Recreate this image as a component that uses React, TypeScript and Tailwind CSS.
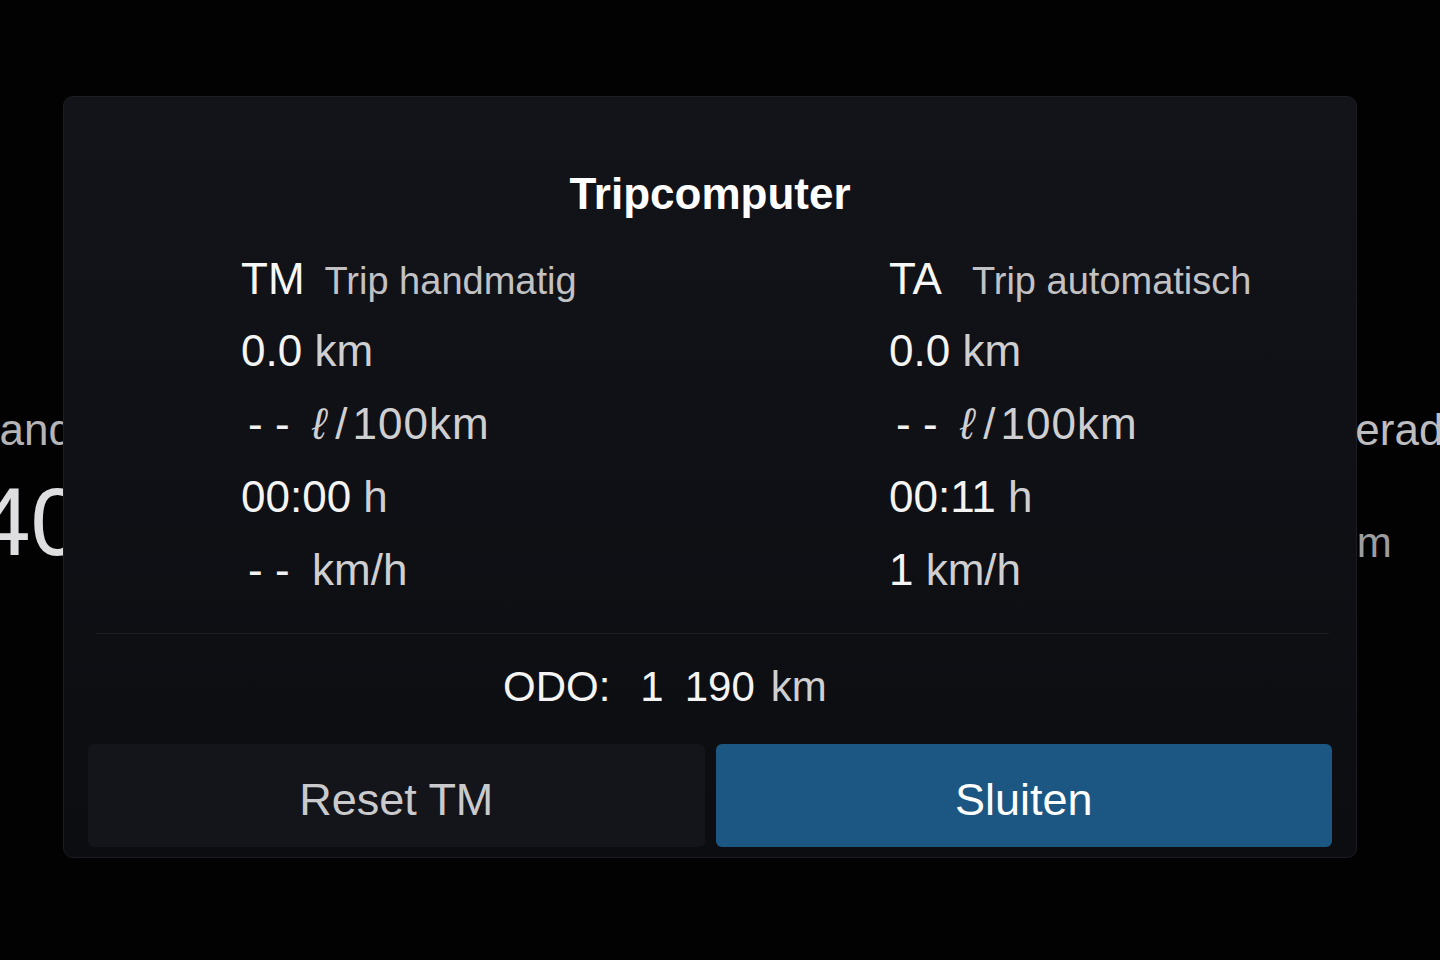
const font = "font-['Liberation_Sans',Arial,sans-serif]";

type Row = { value: string; unit: string; dashes?: boolean };

type TripProps = {
  code: string;
  label: string;
  labelGap: string;
  rows: Row[];
  className?: string;
};

// "ℓ/100km" is drawn with a slanted litre sign and a little air round the slash
function Unit({ unit }: { unit: string }) {
  if (unit === "ℓ/100km") {
    return (
      <span className="text-[#cfcfd1]">
        <span className="italic">ℓ</span>
        <span className="ml-[9px]">/</span>
        <span className="ml-[5px] tracking-[1px]">100km</span>
      </span>
    );
  }
  return <span className="text-[#cfcfd1]">{unit}</span>;
}

function TripColumn({ code, label, labelGap, rows, className }: TripProps) {
  return (
    <div className={className}>
      <div className="h-[70px] leading-[70px] whitespace-nowrap">
        <span className="text-[44px] text-[#f7f7f7]">{code}</span>
        <span className={`${labelGap} text-[38px] text-[#c2c2c4]`}>{label}</span>
      </div>
      {rows.map((row, i) => (
        <div key={i} className="h-[73px] leading-[73px] text-[44px] whitespace-nowrap">
          {row.dashes ? (
            <span className="inline-block w-[71px] pl-[7px] text-[#f2f2f2]">- -</span>
          ) : (
            <span className="text-[#f4f4f4]">{row.value} </span>
          )}
          <Unit unit={row.unit} />
        </div>
      ))}
    </div>
  );
}

export default function App() {
  return (
    <div className={`${font} relative h-[960px] w-full overflow-hidden bg-[#020203]`}>
      {/* page behind the dialog */}
      <div className="flex h-full">
        <div className="w-[84px] pt-[408px]">
          <div className="flex w-[73px] justify-end whitespace-nowrap text-[44px] leading-[44px] text-[#b4b4b6]">
            Afstand
          </div>
          <div className="mt-[22px] flex w-[84px] justify-end whitespace-nowrap text-[96px] leading-[96px] text-[#dedee0]">
            140
          </div>
        </div>
        <div className="flex-1" />
        <div className="w-[186px] pt-[408px]">
          <div className="ml-[28px] whitespace-nowrap text-[44px] leading-[44px] text-[#bdbdc0]">
            Actieradius
          </div>
          <div className="mt-[70px] whitespace-nowrap text-[42px] leading-[42px] text-[#9d9da0]">
            312 km
          </div>
        </div>
      </div>

      {/* Tripcomputer dialog */}
      <div className="absolute left-[63px] top-[96px] flex h-[762px] w-[1294px] flex-col rounded-[10px] border border-[#1b1d22] bg-linear-to-b from-[#121419] to-[#0c0d11]">
        <div className="pt-[75px]">
          <h1 className="text-center text-[44px] font-bold leading-[44px] text-white">Tripcomputer</h1>
        </div>

        <div className="mt-[28px] flex pl-[177px]">
          <TripColumn
            className="w-[648px]"
            code="TM"
            label="Trip handmatig"
            labelGap="ml-[20px]"
            rows={[
              { value: "0.0", unit: "km" },
              { value: "", unit: "ℓ/100km", dashes: true },
              { value: "00:00", unit: "h" },
              { value: "", unit: "km/h", dashes: true },
            ]}
          />
          <TripColumn
            code="TA"
            label="Trip automatisch"
            labelGap="ml-[30px]"
            rows={[
              { value: "0.0", unit: "km" },
              { value: "", unit: "ℓ/100km", dashes: true },
              { value: "00:11", unit: "h" },
              { value: "1", unit: "km/h" },
            ]}
          />
        </div>

        <div className="mt-[27px] ml-[32px] mr-[27px] h-px bg-[#1c1e23]" />

        <div className="mt-[32px] whitespace-nowrap pl-[439px] text-[42px] leading-[42px]">
          <span className="text-[#f4f4f4]">ODO:</span>
          <span className="ml-[30px] text-[#f4f4f4]">1{"\u2002"}190</span>
          <span className="ml-[16px] text-[#cfcfd1]">km</span>
        </div>

        <div className="mt-auto flex gap-[11px] px-[24px] pb-[10px]">
          <button className="flex h-[103px] flex-1 items-center justify-center rounded-[6px] bg-[#13151b] pt-[8px] text-[45px] text-[#cacacc]">
            Reset TM
          </button>
          <button className="flex h-[103px] flex-1 items-center justify-center rounded-[6px] bg-[#1c5683] pt-[8px] text-[45px] text-white">
            Sluiten
          </button>
        </div>
      </div>
    </div>
  );
}
